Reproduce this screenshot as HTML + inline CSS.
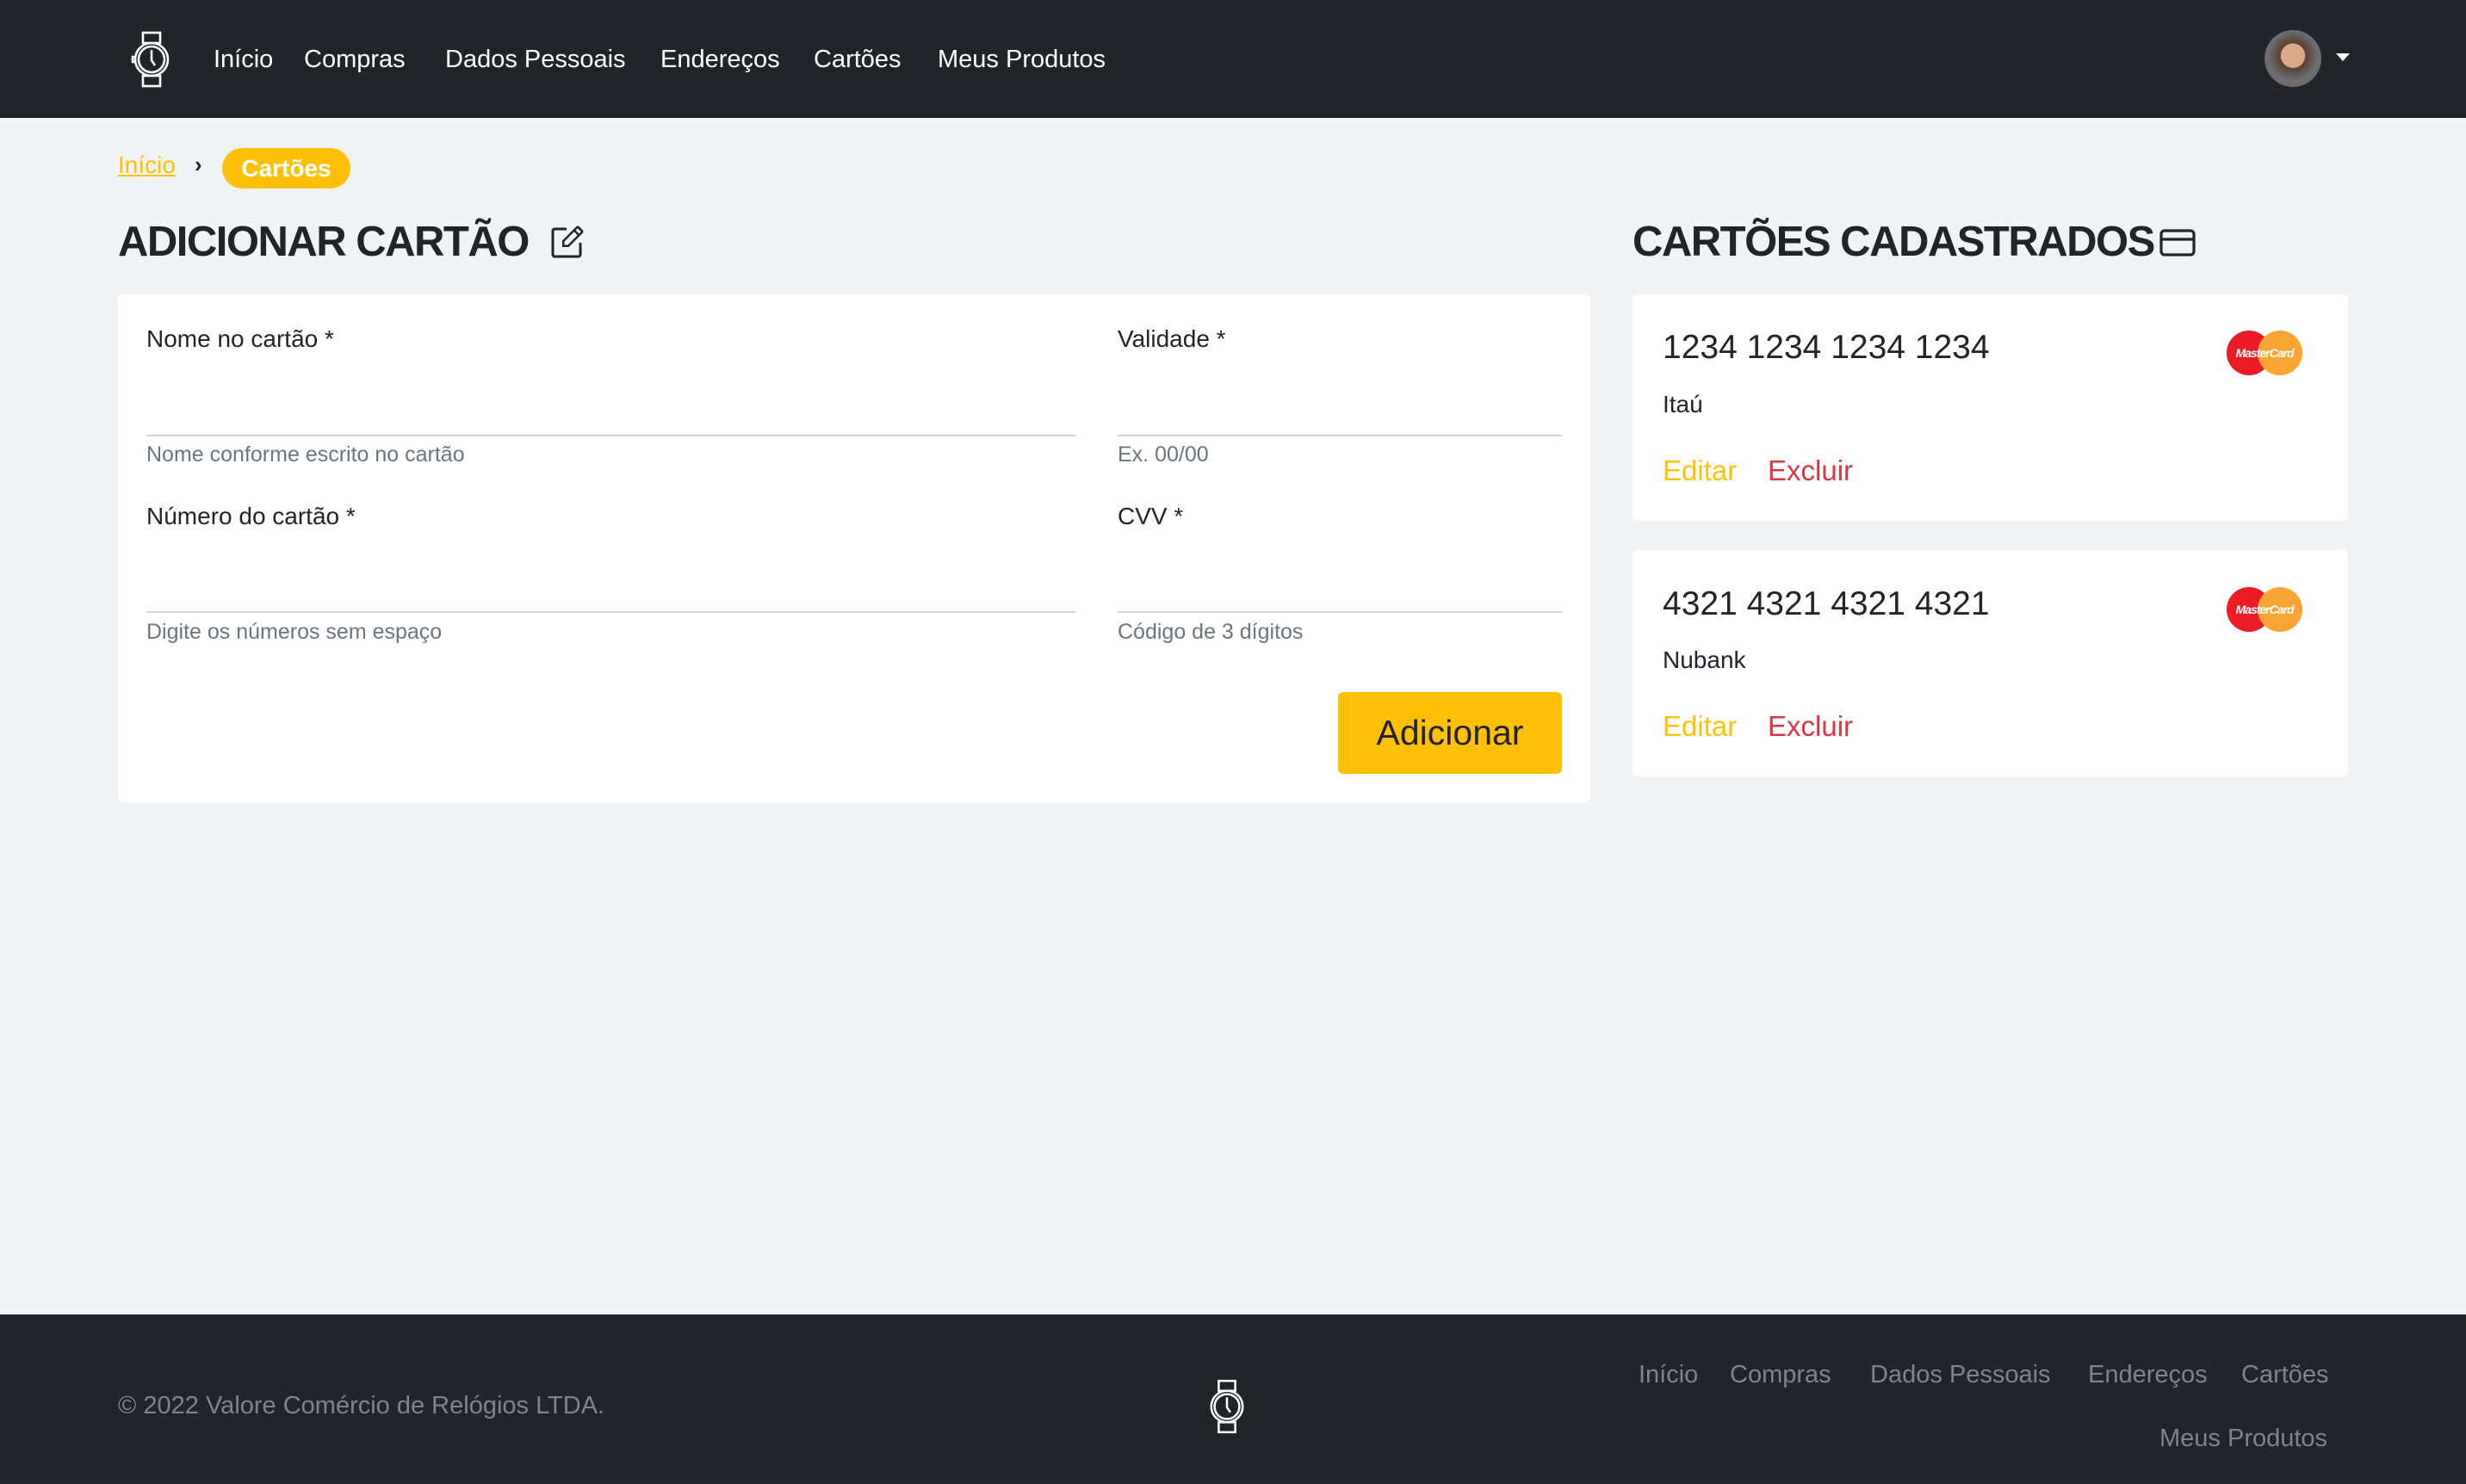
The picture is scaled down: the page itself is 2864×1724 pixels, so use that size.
<!DOCTYPE html>
<html><head><meta charset="utf-8"><style>
*{margin:0;padding:0;box-sizing:border-box}
body{width:2864px;height:1724px;background:#f1f2f4;font-family:"Liberation Sans",sans-serif;color:#212529;position:relative;overflow:hidden}
.abs{position:absolute;white-space:nowrap}
nav{position:absolute;left:0;top:0;width:2864px;height:137px;background:#212529}
nav .l{position:absolute;top:53px;font-size:29px;color:#fff}
.card{position:absolute;background:#fff;border-radius:6px}
.lbl{font-size:28px;color:#212529}
.help{font-size:25px;color:#6c757d}
.line{position:absolute;height:2px;background:#ced4da}
footer{position:absolute;left:0;top:1527px;width:2864px;height:197px;background:#212529}
footer .f{position:absolute;font-size:29px;color:#7d848b}
.mc{position:absolute;width:90px;height:54px}
.h{font-size:49px;font-weight:bold;letter-spacing:-1.5px}
</style></head><body>
<nav>
<svg class="abs" style="left:150px;top:36px" width="52" height="66" viewBox="0 0 26 33" fill="none" stroke="#fff" stroke-width="1.3"><rect x="8" y="1" width="10" height="6"/><rect x="8" y="26" width="10" height="6"/><circle cx="13" cy="16.5" r="9.5"/><circle cx="13" cy="16.5" r="7.5"/><path d="M13 11v6l2 3"/><path d="M3 15h-1v3h1"/></svg>
<span class="l" style="left:248px">Início</span>
<span class="l" style="left:353px">Compras</span>
<span class="l" style="left:517px">Dados Pessoais</span>
<span class="l" style="left:767px">Endereços</span>
<span class="l" style="left:945px">Cartões</span>
<span class="l" style="left:1089px">Meus Produtos</span>
<div class="abs" style="left:2630px;top:35px;width:66px;height:66px;border-radius:50%;background:radial-gradient(circle at 50% 45%,#d9a98a 0 28%,#5a4030 30%,#6b7078 60%,#8a5a3a 100%)"></div>
<div class="abs" style="left:2713px;top:62px;width:0;height:0;border-left:8px solid transparent;border-right:8px solid transparent;border-top:9px solid #fff"></div>
</nav>
<span class="abs" style="left:137px;top:176px;font-size:28px;color:#ffc107;text-decoration:underline">Início</span>
<span class="abs" style="left:226px;top:176px;font-size:26px;font-weight:bold">›</span>
<div class="abs" style="left:258px;top:172px;width:149px;height:47px;border-radius:24px;background:#ffc107;color:#fff;font-weight:bold;font-size:28px;text-align:center;line-height:47px">Cartões</div>
<div class="abs h" style="left:137px;top:253px">ADICIONAR CARTÃO</div>
<svg class="abs" style="left:638px;top:262px" width="40" height="40" viewBox="0 0 16 16" fill="#212529"><path d="M15.5 2.1 13.9.5a1 1 0 0 0-1.4 0L6 7v3h3l6.5-6.5a1 1 0 0 0 0-1.4zM8.6 9H7V7.4l4.5-4.5 1.6 1.6zM13.8 3.8l-1.6-1.6.9-.9 1.6 1.6z"/><path d="M1 13.5A1.5 1.5 0 0 0 2.5 15h11a1.5 1.5 0 0 0 1.5-1.5V8h-1.2v5.5a.3.3 0 0 1-.3.3h-11a.3.3 0 0 1-.3-.3v-11a.3.3 0 0 1 .3-.3H8V1H2.5A1.5 1.5 0 0 0 1 2.5z"/></svg>
<div class="card" style="left:137px;top:342px;width:1710px;height:590px"></div>
<span class="abs lbl" style="left:170px;top:378px">Nome no cartão *</span>
<div class="line" style="left:170px;top:505px;width:1079px"></div>
<span class="abs help" style="left:170px;top:514px">Nome conforme escrito no cartão</span>
<span class="abs lbl" style="left:1298px;top:378px">Validade *</span>
<div class="line" style="left:1298px;top:505px;width:516px"></div>
<span class="abs help" style="left:1298px;top:514px">Ex. 00/00</span>
<span class="abs lbl" style="left:170px;top:584px">Número do cartão *</span>
<div class="line" style="left:170px;top:710px;width:1079px"></div>
<span class="abs help" style="left:170px;top:720px">Digite os números sem espaço</span>
<span class="abs lbl" style="left:1298px;top:584px">CVV *</span>
<div class="line" style="left:1298px;top:710px;width:516px"></div>
<span class="abs help" style="left:1298px;top:720px">Código de 3 dígitos</span>
<div class="abs" style="left:1554px;top:804px;width:260px;height:95px;background:#ffc107;border-radius:6px;font-size:41px;text-align:center;line-height:95px;color:#212529">Adicionar</div>
<div class="abs h" style="left:1896px;top:253px">CARTÕES CADASTRADOS</div>
<svg class="abs" style="left:2508px;top:266px" width="42" height="32" viewBox="0 0 21 16" fill="none" stroke="#212529" stroke-width="1.6"><rect x="1" y="1" width="19" height="14" rx="2"/><path d="M1 6h19"/></svg>
<div class="card" style="left:1896px;top:342px;width:831px;height:263px"></div>
<div class="card" style="left:1896px;top:639px;width:831px;height:263px"></div>
<span class="abs" style="left:1931px;top:382px;font-size:39px">1234 1234 1234 1234</span>
<span class="abs" style="left:1931px;top:454px;font-size:28px">Itaú</span>
<span class="abs" style="left:1931px;top:528px;font-size:33px;color:#ffc107">Editar</span>
<span class="abs" style="left:2053px;top:528px;font-size:33px;color:#dc3545">Excluir</span>
<span class="abs" style="left:1931px;top:680px;font-size:39px">4321 4321 4321 4321</span>
<span class="abs" style="left:1931px;top:751px;font-size:28px">Nubank</span>
<span class="abs" style="left:1931px;top:825px;font-size:33px;color:#ffc107">Editar</span>
<span class="abs" style="left:2053px;top:825px;font-size:33px;color:#dc3545">Excluir</span>
<svg class="mc" style="left:2585px;top:383px" viewBox="0 0 90 54"><circle cx="27" cy="27" r="26" fill="#eb1c26"/><circle cx="63" cy="27" r="26" fill="#f9a533"/><text x="45" y="32" font-size="14" font-style="italic" font-weight="bold" fill="#fff" text-anchor="middle" letter-spacing="-1" font-family="Liberation Sans">MasterCard</text></svg>
<svg class="mc" style="left:2585px;top:681px" viewBox="0 0 90 54"><circle cx="27" cy="27" r="26" fill="#eb1c26"/><circle cx="63" cy="27" r="26" fill="#f9a533"/><text x="45" y="32" font-size="14" font-style="italic" font-weight="bold" fill="#fff" text-anchor="middle" letter-spacing="-1" font-family="Liberation Sans">MasterCard</text></svg>
<footer>
<span class="f" style="left:137px;top:90px">© 2022 Valore Comércio de Relógios LTDA.</span>
<svg class="abs" style="left:1400px;top:74px" width="50" height="66" viewBox="0 0 26 33" fill="none" stroke="#fff" stroke-width="1.3"><rect x="8" y="1" width="10" height="6"/><rect x="8" y="26" width="10" height="6"/><circle cx="13" cy="16.5" r="9.5"/><circle cx="13" cy="16.5" r="7.5"/><path d="M13 11v6l2 3"/></svg>
<span class="f" style="left:1903px;top:54px">Início</span>
<span class="f" style="left:2009px;top:54px">Compras</span>
<span class="f" style="left:2172px;top:54px">Dados Pessoais</span>
<span class="f" style="left:2425px;top:54px">Endereços</span>
<span class="f" style="left:2603px;top:54px">Cartões</span>
<span class="f" style="left:2508px;top:128px">Meus Produtos</span>
</footer>
</body></html>
